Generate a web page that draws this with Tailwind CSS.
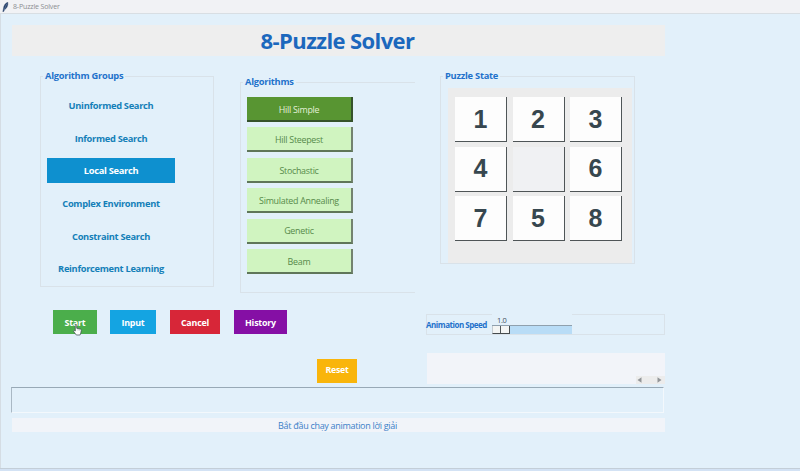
<!DOCTYPE html>
<html lang="vi">
<head>
<meta charset="utf-8">
<title>8-Puzzle Solver</title>
<script src="https://cdn.jsdelivr.net/npm/@tailwindcss/browser@4"></script>
</head>
<body class="w-[800px] h-[471px] overflow-hidden bg-[#e2f0fa] font-['Open_Sans','Noto_Sans',sans-serif]">
<div class="relative flex h-[471px] w-[800px] flex-col">
  <header class="flex h-[14px] shrink-0 items-center gap-[4px] border-b border-[#d8dee3] bg-[#f1f2f5] pl-[2px]">
    <svg class="h-[10px] w-[7px]" viewBox="0 0 7 10"><path d="M5.8 .3C3.5 1 1.6 3.4 1.4 7L.8 9.6l1-.2.6-1.6C4.8 6.6 6.3 3.6 5.8.3Z" fill="#263e66" stroke="#263e66" stroke-width=".4"/><path d="M4.8 1.6 1.9 8.6" stroke="#7f9dc4" stroke-width=".5"/></svg>
    <span class="text-[7px] leading-none tracking-[-0.15px] text-[#8b8d91]">8-Puzzle Solver</span>
  </header>
  <main class="flex h-[454px] shrink-0 flex-col border-l border-[#d5dde4] pl-[11px]">
    <h1 class="mt-[11px] flex h-[31px] w-[653px] items-center justify-center bg-[#eeeeee] pb-[1px] pr-[2px] text-[22px] font-bold leading-none tracking-[-0.6px] text-[#1c68bd]"><span>8-Puzzle Solver</span></h1>

    <section class="mt-[13px] flex h-[241px] items-start pl-[28px]">
      <fieldset class="h-[218px] w-[174px] border border-[#d9e2e9]">
        <legend class="ml-[2px] px-[2px] text-[9.3px] font-bold leading-[14px] tracking-[-0.25px] text-[#1f72cb]">Algorithm Groups</legend>
        <div class="ml-[6px] mt-[10px] flex w-[128px] flex-col gap-[7.7px] text-[9.3px] font-bold tracking-[-0.3px] text-[#147fb8] *:pt-[1px]">
          <button class="h-[25px]">Uninformed Search</button>
          <button class="h-[25px]">Informed Search</button>
          <button class="h-[25px] bg-[#0e90cf] text-white">Local Search</button>
          <button class="h-[25px]">Complex Environment</button>
          <button class="h-[25px]">Constraint Search</button>
          <button class="h-[25px]">Reinforcement Learning</button>
        </div>
      </fieldset>
      <fieldset class="ml-[26px] mt-[6px] h-[218px] w-[175px] border border-r-0 border-[#d9e2e9]">
        <legend class="ml-[2px] px-[2px] text-[9.3px] font-bold leading-[14px] tracking-[-0.25px] text-[#1f72cb]">Algorithms</legend>
        <div class="ml-[6px] mt-[8px] flex w-[106px] flex-col gap-[5.4px] text-[8.9px] tracking-[-0.27px] text-[#568a4a] *:pt-[2px]">
          <button class="h-[25px] border-b-2 border-r-2 border-[#35522b] bg-[#589532] text-[#e3f1d8]">Hill Simple</button>
          <button class="h-[25px] border-b-2 border-r-2 border-b-[#5f7659] border-r-[#73836f] bg-[#d0f4c0]">Hill Steepest</button>
          <button class="h-[25px] border-b-2 border-r-2 border-b-[#5f7659] border-r-[#73836f] bg-[#d0f4c0]">Stochastic</button>
          <button class="h-[25px] whitespace-nowrap border-b-2 border-r-2 border-b-[#5f7659] border-r-[#73836f] bg-[#d0f4c0]">Simulated Annealing</button>
          <button class="h-[25px] border-b-2 border-r-2 border-b-[#5f7659] border-r-[#73836f] bg-[#d0f4c0]">Genetic</button>
          <button class="h-[25px] border-b-2 border-r-2 border-b-[#5f7659] border-r-[#73836f] bg-[#d0f4c0]">Beam</button>
        </div>
      </fieldset>
      <fieldset class="ml-[25px] h-[195px] w-[195px] border border-[#d9e2e9]">
        <legend class="ml-[2px] px-[2px] text-[9.3px] font-bold leading-[14px] tracking-[-0.25px] text-[#1f72cb]">Puzzle State</legend>
        <div class="ml-[7px] mt-[5px] grid h-[175px] w-[184px] grid-cols-[52px_52px_52px] grid-rows-[45px_45px_45px] content-start gap-x-[5.5px] gap-y-[4.5px] bg-[#ececec] pl-[7px] pt-[9px] font-['Liberation_Sans',sans-serif] text-[25px] font-bold leading-none text-[#37474f] *:flex *:items-center *:justify-center *:border-b *:border-r *:border-[#4f5557]">
          <div class="bg-[#fdfdfd]">1</div><div class="bg-[#fdfdfd]">2</div><div class="bg-[#fdfdfd]">3</div>
          <div class="bg-[#fdfdfd]">4</div><div class="bg-[#f0f1f3]"></div><div class="bg-[#fdfdfd]">6</div>
          <div class="bg-[#fdfdfd]">7</div><div class="bg-[#fdfdfd]">5</div><div class="bg-[#fdfdfd]">8</div>
        </div>
      </fieldset>
    </section>

    <section class="flex h-[77px] w-[653px] justify-between">
      <div class="flex w-[345px] flex-col pl-[41px]">
        <div class="flex text-[8.9px] font-bold tracking-[-0.2px] text-white *:pt-[1px]">
          <button class="relative h-[24px] w-[44px] bg-[#4bae4b]">Start
            <svg class="absolute left-[20px] top-[14px] h-[12px] w-[9px]" viewBox="0 0 9 12"><path d="M2.3 7V1.2c0-1 1.4-1 1.4 0v3.1l3.6.7c.8.2 1 .6 1 1.3L7.8 9l-.7 2H3.3L.8 7.7c-.7-1 .4-1.6 1.5-.7Z" fill="#fff" stroke="#39454d" stroke-width=".7"/><path d="M5 5v1.6M6.4 5.2v1.5" stroke="#77838a" stroke-width=".4"/></svg>
          </button>
          <button class="ml-[13px] h-[24px] w-[46px] bg-[#14a4e2]">Input</button>
          <button class="ml-[14px] h-[24px] w-[50px] bg-[#d72638]">Cancel</button>
          <button class="ml-[14px] h-[24px] w-[53px] bg-[#850fa5]">History</button>
        </div>
        <button class="mt-[25px] h-[24px] w-[40px] self-end bg-[#f9b50b] text-[8.8px] font-bold tracking-[-0.3px] text-white">Reset</button>
      </div>
      <div class="mt-[4px] flex w-[239px] flex-col">
        <div class="flex h-[21px] border border-[#d9e2e9]">
          <span class="-ml-[1px] w-[66px] whitespace-nowrap text-[8px] font-bold leading-[20px] tracking-[-0.48px] text-[#1f72cb]">Animation Speed</span>
          <div class="flex w-[80px] flex-col">
            <span class="-mt-[1px] h-[11px] w-[80px] bg-[#e2f0fa] pl-[5px] text-[7.5px] leading-[12px] tracking-[-0.4px] text-[#45515a]">1.0</span>
            <div class="flex h-[9px] border-t border-[#8fa0ad] bg-[#b8dcf6]">
              <div class="flex w-[18px] border-b border-l border-r border-b-[#454b4d] border-l-[#c5ccd1] border-r-[#454b4d] bg-[#f3f5f4]"><i class="ml-[7px] w-px bg-[#4f5557]"></i></div>
            </div>
          </div>
        </div>
        <div class="ml-[1px] mt-[18px] flex h-[31px] items-end justify-end bg-[#f2f4f9]">
          <div class="flex h-[8px] w-[29px] items-center justify-between bg-[#ececec] px-[1px]">
            <svg class="h-[6px] w-[5px]" viewBox="0 0 5 6"><path d="M4.5.3v5.4L.5 3Z" fill="#929598"/></svg>
            <svg class="mr-[2px] h-[6px] w-[5px]" viewBox="0 0 5 6"><path d="M.5.3v5.4l4-2.7Z" fill="#929598"/></svg>
          </div>
        </div>
      </div>
    </section>

    <div class="-ml-[1px] h-[26px] w-[653px] border border-b-[#f3f8fc] border-l-[#a9b8c4] border-r-[#f3f8fc] border-t-[#98a9b6]"></div>
    <p class="mt-[5px] flex h-[14px] w-[653px] items-center justify-center bg-[#f1f4f9] pr-[2px] pt-[1px] text-[9px] leading-none tracking-[-0.3px] text-[#3b7fc8]">Bắt đầu chạy animation lời giải</p>
  </main>
  <footer class="h-[3px] border-t border-[#c3ced8] bg-[#d3e2f4]"></footer>
</div>
</body>
</html>
